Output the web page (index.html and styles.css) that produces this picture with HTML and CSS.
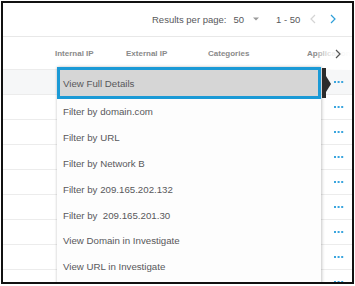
FILE: index.html
```html
<!DOCTYPE html>
<html>
<head>
<meta charset="utf-8">
<link rel="stylesheet" href="styles.css">
</head>
<body>
<div class="frame">
  <div class="topbar">
    <span class="label">Results per page:</span>
    <span class="perpage">50</span>
    <svg class="caret" width="6" height="4" viewBox="0 0 6 4"><path d="M0 0.5 L6 0.5 L3 3.5 Z" fill="#9a9a9a"/></svg>
    <span class="range">1 - 50</span>
    <svg class="nav prev" width="6" height="10" viewBox="0 0 6 10"><path d="M5 1 L1 5 L5 9" fill="none" stroke="#d4d4d4" stroke-width="1.2"/></svg>
    <svg class="nav next" width="6" height="10" viewBox="0 0 6 10"><path d="M1 1 L5 5 L1 9" fill="none" stroke="#2e9fd9" stroke-width="1.2"/></svg>
  </div>
  <div class="thead">
    <span>Internal IP</span>
    <span>External IP</span>
    <span>Categories</span>
    <span>Application</span>
  </div>
  <div class="rows">
    <div class="row active"><svg class="dots" width="10" height="2" viewBox="0 0 10 2"><rect x="0" y="0" width="2" height="2"/><rect x="3.6" y="0" width="2" height="2"/><rect x="7.2" y="0" width="2" height="2"/></svg></div>
    <div class="row"><svg class="dots" width="10" height="2" viewBox="0 0 10 2"><rect x="0" y="0" width="2" height="2"/><rect x="3.6" y="0" width="2" height="2"/><rect x="7.2" y="0" width="2" height="2"/></svg></div>
    <div class="row"><svg class="dots" width="10" height="2" viewBox="0 0 10 2"><rect x="0" y="0" width="2" height="2"/><rect x="3.6" y="0" width="2" height="2"/><rect x="7.2" y="0" width="2" height="2"/></svg></div>
    <div class="row"><svg class="dots" width="10" height="2" viewBox="0 0 10 2"><rect x="0" y="0" width="2" height="2"/><rect x="3.6" y="0" width="2" height="2"/><rect x="7.2" y="0" width="2" height="2"/></svg></div>
    <div class="row"><svg class="dots" width="10" height="2" viewBox="0 0 10 2"><rect x="0" y="0" width="2" height="2"/><rect x="3.6" y="0" width="2" height="2"/><rect x="7.2" y="0" width="2" height="2"/></svg></div>
    <div class="row"><svg class="dots" width="10" height="2" viewBox="0 0 10 2"><rect x="0" y="0" width="2" height="2"/><rect x="3.6" y="0" width="2" height="2"/><rect x="7.2" y="0" width="2" height="2"/></svg></div>
    <div class="row"><svg class="dots" width="10" height="2" viewBox="0 0 10 2"><rect x="0" y="0" width="2" height="2"/><rect x="3.6" y="0" width="2" height="2"/><rect x="7.2" y="0" width="2" height="2"/></svg></div>
    <div class="row"><svg class="dots" width="10" height="2" viewBox="0 0 10 2"><rect x="0" y="0" width="2" height="2"/><rect x="3.6" y="0" width="2" height="2"/><rect x="7.2" y="0" width="2" height="2"/></svg></div>
    <div class="row"><svg class="dots" width="10" height="2" viewBox="0 0 10 2"><rect x="0" y="0" width="2" height="2"/><rect x="3.6" y="0" width="2" height="2"/><rect x="7.2" y="0" width="2" height="2"/></svg></div>
  </div>

  <div class="scroll-right">
    <svg width="6" height="10" viewBox="0 0 6 10"><path d="M1 1 L5 5 L1 9" fill="none" stroke="#555" stroke-width="1.2"/></svg>
  </div>

  <div class="menu">
    <div class="item selected">View Full Details</div>
    <div class="item">Filter by domain.com</div>
    <div class="item">Filter by URL</div>
    <div class="item">Filter by Network B</div>
    <div class="item">Filter by 209.165.202.132</div>
    <div class="item">Filter by&nbsp; 209.165.201.30</div>
    <div class="item">View Domain in Investigate</div>
    <div class="item">View URL in Investigate</div>
  </div>
  <svg class="pointer" width="9" height="30" viewBox="0 0 9 30"><path d="M0 0 L4 0 L4 8 L9 16 L4 24 L4 30 L0 30 Z" fill="#2b2b2b"/></svg>
</div>
</body>
</html>
```

FILE: styles.css
```css
* { box-sizing: border-box; }
html, body { margin: 0; padding: 0; background: #fff; }
body { font-family: "Liberation Sans", Arial, sans-serif; }

.frame {
  position: relative;
  margin: 1px 0 0 1px;
  width: 353px;
  height: 283px;
  border: 2px solid #111;
  overflow: hidden;
  background: #fff;
}

.topbar {
  height: 34px;
  border-bottom: 1px solid #e8e8e8;
  display: flex;
  align-items: center;
  padding-left: 149px;
  font-size: 9.5px;
  color: #58585b;
  padding-bottom: 1px;
}
.topbar .perpage { margin-left: 7px; }
.topbar .caret { margin-left: 9px; }
.topbar .range { margin-left: 17px; }
.topbar .prev { margin-left: 10px; }
.topbar .next { margin-left: 14px; }

.thead {
  height: 33px;
  display: grid;
  grid-template-columns: 71px 82px 99px 1fr;
  align-items: center;
  padding-left: 52px;
  font-size: 8px;
  font-weight: bold;
  color: #8a8a8a;
  white-space: nowrap;
  overflow: hidden;
  border-bottom: 1px solid #ececec;
}

.rows { display: flex; flex-direction: column; }
.row {
  height: 25px;
  border-bottom: 1px solid #ececec;
  display: flex;
  align-items: center;
  justify-content: flex-end;
  padding-right: 8px;
}
.row.active { background: #f6f7f8; }
.dots { fill: #3aa5de; }

.scroll-right {
  position: absolute;
  top: 35px;
  right: 0;
  width: 34px;
  height: 32px;
  display: flex;
  align-items: center;
  justify-content: flex-end;
  padding-right: 11px;
  background: linear-gradient(to right, rgba(255,255,255,0.3) 0%, rgba(255,255,255,0.85) 40%, #fff 100%);
}

.menu {
  position: absolute;
  left: 54px;
  top: 64px;
  width: 264px;
  height: 240px;
  background: #fdfdfd;
  box-shadow: 1px 0 3px rgba(0,0,0,0.22), -1px 0 2px rgba(0,0,0,0.08);
  font-size: 9.7px;
  color: #58585b;
}
.item {
  height: 25.8px;
  display: flex;
  align-items: center;
  padding-left: 6px;
  white-space: nowrap;
}
.item.selected {
  height: 32px;
  border: 3px solid #1b9ad6;
  background: #d6d6d6;
  padding-left: 3px;
}

.pointer {
  position: absolute;
  left: 319px;
  top: 65px;
}
```
